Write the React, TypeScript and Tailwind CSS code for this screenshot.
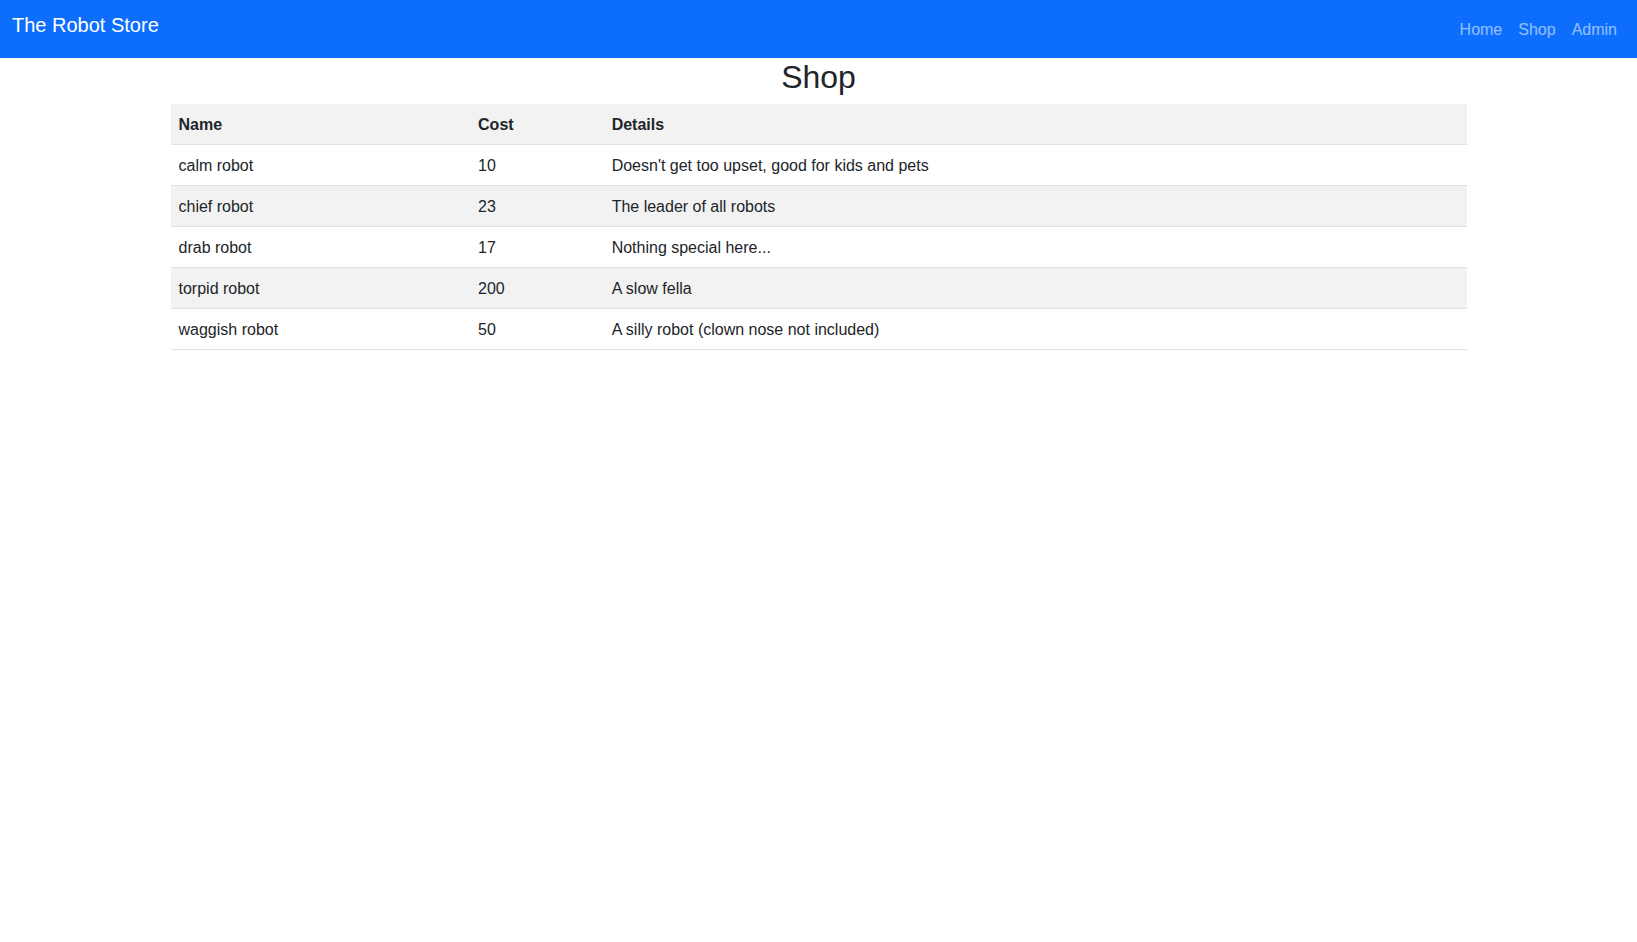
const robots = [
  { name: "calm robot", cost: 10, details: "Doesn't get too upset, good for kids and pets" },
  { name: "chief robot", cost: 23, details: "The leader of all robots" },
  { name: "drab robot", cost: 17, details: "Nothing special here..." },
  { name: "torpid robot", cost: 200, details: "A slow fella" },
  { name: "waggish robot", cost: 50, details: "A silly robot (clown nose not included)" },
];

export default function App() {
  return (
    <div className="min-h-screen bg-white text-[#212529] font-['Liberation_Sans',Arial,sans-serif]">
      <nav className="bg-[#0d6efd] h-[58px] flex justify-between px-3">
        <a className="text-white text-[20px] leading-[30px] pt-[10px]">The Robot Store</a>
        <ul className="flex pt-[18px]">
          <li><a className="px-2 text-[16px] leading-6 text-white/55">Home</a></li>
          <li><a className="px-2 text-[16px] leading-6 text-white/55">Shop</a></li>
          <li><a className="px-2 text-[16px] leading-6 text-white/55">Admin</a></li>
        </ul>
      </nav>
      <div className="max-w-[1320px] mx-auto px-3">
        <h2 className="text-center text-[32px] leading-[1.2] font-medium mb-2">Shop</h2>
        <table className="w-full text-[16px] leading-6 border-collapse">
          <thead>
            <tr className="bg-[#f2f2f2] border-b border-[#dee2e6]">
              <th className="text-left font-bold px-2 pt-[9px] pb-[7px]">Name</th>
              <th className="text-left font-bold px-2 pt-[9px] pb-[7px]">Cost</th>
              <th className="text-left font-bold px-2 pt-[9px] pb-[7px]">Details</th>
            </tr>
          </thead>
          <tbody>
            {robots.map((r, i) => (
              <tr key={r.name} className={(i % 2 === 1 ? "bg-[#f2f2f2] " : "") + "border-b border-[#dee2e6]"}>
                <td className="px-2 pt-[9px] pb-[7px]">{r.name}</td>
                <td className="px-2 pt-[9px] pb-[7px]">{r.cost}</td>
                <td className="px-2 pt-[9px] pb-[7px]">{r.details}</td>
              </tr>
            ))}
          </tbody>
        </table>
      </div>
    </div>
  );
}
